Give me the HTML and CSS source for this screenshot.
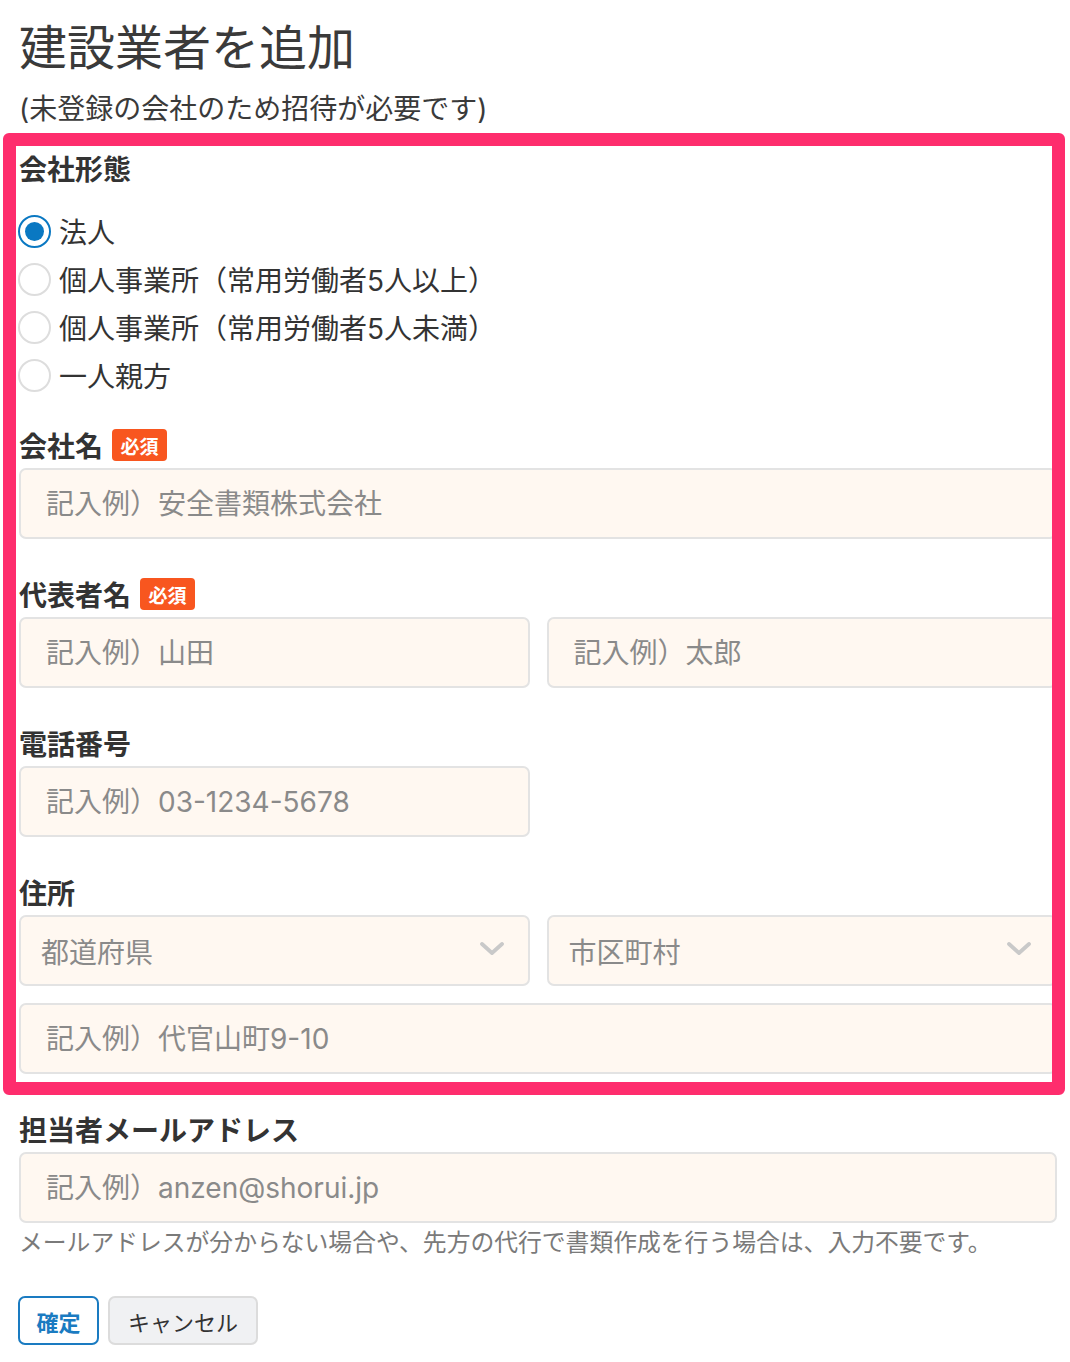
FILE: index.html
```html
<!DOCTYPE html>
<html lang="ja">
<head>
<meta charset="utf-8">
<title>建設業者を追加</title>
<link rel="stylesheet" href="styles.css">
</head>
<body>
<div class="page">
  <h1 class="title">建設業者を追加</h1>
  <p class="subtitle">(未登録の会社のため招待が必要です)</p>

  <div class="label first">会社形態</div>
  <div class="radios">
    <label class="radio"><span class="dot checked"></span><span>法人</span></label>
    <label class="radio"><span class="dot"></span><span>個人事業所（常用労働者5人以上）</span></label>
    <label class="radio"><span class="dot"></span><span>個人事業所（常用労働者5人未満）</span></label>
    <label class="radio"><span class="dot"></span><span>一人親方</span></label>
  </div>

  <div class="label gap-small">会社名<span class="badge">必須</span></div>
  <input class="field" type="text" placeholder="記入例）安全書類株式会社">

  <div class="label">代表者名<span class="badge">必須</span></div>
  <div class="row">
    <input class="field" type="text" placeholder="記入例）山田">
    <input class="field" type="text" placeholder="記入例）太郎">
  </div>

  <div class="label">電話番号</div>
  <div class="row">
    <input class="field" type="text" placeholder="記入例）03-1234-5678">
    <div></div>
  </div>

  <div class="label">住所</div>
  <div class="row">
    <div class="select"><span>都道府県</span><svg class="chev" width="24" height="14" viewBox="0 0 24 14"><path d="M2 2 L12 11 L22 2" fill="none" stroke="#c9c9c9" stroke-width="3.8" stroke-linecap="round" stroke-linejoin="round"/></svg></div>
    <div class="select"><span>市区町村</span><svg class="chev" width="24" height="14" viewBox="0 0 24 14"><path d="M2 2 L12 11 L22 2" fill="none" stroke="#c9c9c9" stroke-width="3.8" stroke-linecap="round" stroke-linejoin="round"/></svg></div>
  </div>
  <input class="field addr" type="text" placeholder="記入例）代官山町9-10">

  <div class="label">担当者メールアドレス</div>
  <input class="field" type="text" placeholder="記入例）anzen@shorui.jp">
  <p class="help">メールアドレスが分からない場合や、先方の代行で書類作成を行う場合は、入力不要です。</p>

  <div class="buttons">
    <button class="btn primary" type="button">確定</button>
    <button class="btn cancel" type="button">キャンセル</button>
  </div>

  <div class="highlight"></div>
</div>
</body>
</html>
```

FILE: styles.css
```css
html, body {
  margin: 0;
  padding: 0;
  background: #ffffff;
}

body {
  font-family: "Inter", "Noto Sans CJK JP", sans-serif;
  color: #333333;
}

.page {
  position: relative;
  padding: 14px 13px 40px 19px;
}

.title {
  margin: 0;
  font-family: "Noto Sans CJK JP", sans-serif;
  font-size: 48px;
  line-height: 60px;
  font-weight: 400;
  color: #3a3a3a;
}

.subtitle {
  margin: 15px 0 0 0;
  font-size: 28px;
  line-height: 40px;
  color: #3a3a3a;
}

.label {
  display: flex;
  align-items: center;
  height: 36px;
  margin-top: 37px;
  margin-bottom: 5px;
  font-family: "Noto Sans CJK JP", sans-serif;
  font-size: 28px;
  font-weight: 700;
  color: #333333;
}

.label.first {
  margin-top: 21px;
  margin-bottom: 21px;
}

.label.gap-small {
  margin-top: 28px;
}

.badge {
  display: inline-flex;
  align-items: center;
  justify-content: center;
  margin-left: 9px;
  width: 55px;
  height: 32px;
  border-radius: 4px;
  background: #f8561f;
  color: #ffffff;
  font-size: 19px;
  font-weight: 700;
}

.radios {
  display: flex;
  flex-direction: column;
}

.radio {
  display: flex;
  align-items: center;
  height: 48px;
  font-size: 28px;
  color: #333333;
  gap: 8px;
}

.dot {
  box-sizing: border-box;
  width: 33px;
  height: 33px;
  margin-left: -1px;
  border-radius: 50%;
  border: 2px solid #dddddd;
  background: #ffffff;
  display: flex;
  align-items: center;
  justify-content: center;
}

.dot.checked {
  border-color: #0a78c2;
}

.dot.checked::after {
  content: "";
  width: 19px;
  height: 19px;
  border-radius: 50%;
  background: #0a78c2;
}

.field {
  display: block;
  box-sizing: border-box;
  width: 100%;
  height: 71px;
  margin: 0;
  padding: 0 0 0 25px;
  border: 2px solid #e3e3e3;
  border-radius: 7px;
  background: #fff8f1;
  font-family: "Inter", "Noto Sans CJK JP", sans-serif;
  font-size: 28px;
  color: #333333;
  outline: none;
}

.field::placeholder {
  color: #8a8a8a;
  opacity: 1;
}

.row {
  display: grid;
  grid-template-columns: 1fr 1fr;
  column-gap: 17px;
}

.select {
  box-sizing: border-box;
  height: 71px;
  display: flex;
  align-items: center;
  justify-content: space-between;
  padding: 0 24px 0 20px;
  border: 2px solid #e3e3e3;
  border-radius: 7px;
  background: #fff8f1;
  font-size: 28px;
  color: #8a8a8a;
}

.chev {
  display: block;
  margin-top: -4px;
}

.field.addr {
  margin-top: 17px;
}

.help {
  margin: 5px 0 0 0;
  font-size: 23.8px;
  line-height: 30px;
  color: #7a7a7a;
}

.buttons {
  display: flex;
  gap: 9px;
  margin-top: 38px;
}

.btn {
  box-sizing: border-box;
  height: 49px;
  border-radius: 7px;
  font-family: "Noto Sans CJK JP", sans-serif;
  font-size: 22px;
  padding: 0;
  cursor: pointer;
}

.btn.primary {
  width: 81px;
  margin-left: -1px;
  border: 2px solid #1a7bc1;
  background: #ffffff;
  color: #1a7bc1;
  font-weight: 700;
}

.btn.cancel {
  width: 150px;
  border: 2px solid #dcdcdc;
  background: #f0f1f3;
  color: #333333;
}

.highlight {
  position: absolute;
  left: 3px;
  top: 133px;
  width: 1062px;
  height: 962px;
  box-sizing: border-box;
  border: 13px solid #fe2d6d;
  border-radius: 6px;
  pointer-events: none;
}
```
